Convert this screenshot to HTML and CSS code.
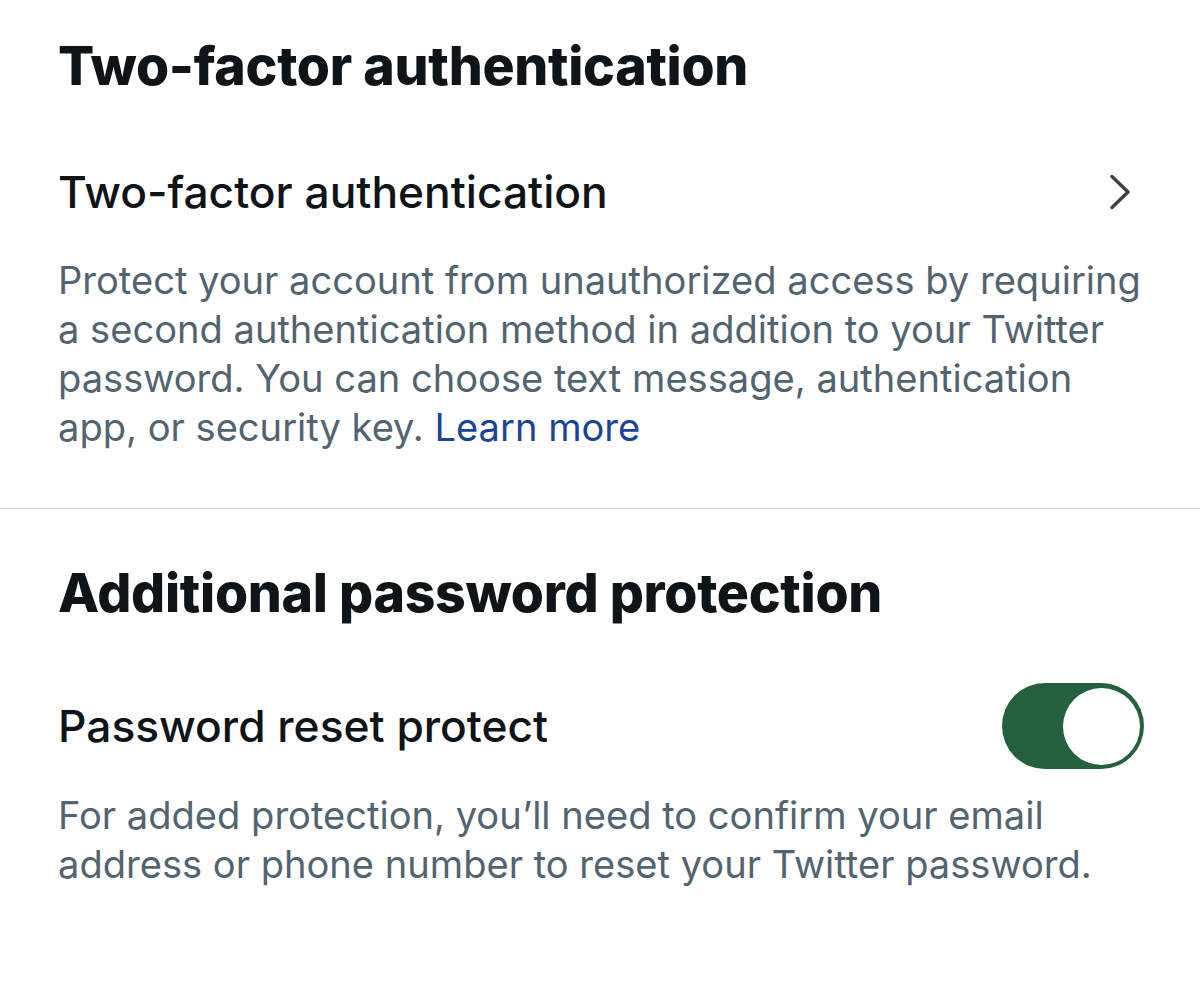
FILE: index.html
```html
<!DOCTYPE html>
<html lang="en">
<head>
<meta charset="utf-8">
<title>Security</title>
<link rel="stylesheet" href="styles.css">
</head>
<body>
<main class="page">
  <section class="section first">
    <h1 class="section-title">Two-factor authentication</h1>
    <div class="row">
      <h2 class="row-title">Two-factor authentication</h2>
      <svg class="chevron" width="24" height="36" viewBox="0 0 24 36" aria-hidden="true">
        <path d="M4 2.5 L20 18 L4 33.5" fill="none" stroke="#39424b" stroke-width="3.4" stroke-linecap="round" stroke-linejoin="round"/>
      </svg>
    </div>
    <p class="desc">Protect your account from unauthorized access by requiring<br>a second authentication method in addition to your Twitter<br>password. You can choose text message, authentication<br>app, or security key. <a class="link" href="#">Learn more</a></p>
  </section>
  <hr class="divider">
  <section class="section second">
    <h1 class="section-title">Additional password protection</h1>
    <div class="row">
      <h2 class="row-title">Password reset protect</h2>
      <span class="toggle" role="switch" aria-checked="true"><span class="knob"></span></span>
    </div>
    <p class="desc">For added protection, you’ll need to confirm your email<br>address or phone number to reset your Twitter password.</p>
  </section>
</main>
</body>
</html>
```

FILE: styles.css
```css
html, body {
  margin: 0;
  padding: 0;
  background: #ffffff;
}
body {
  font-family: "Inter", "Noto Sans", sans-serif;
  color: #0f1419;
  width: 1200px;
  height: 1002px;
  overflow: hidden;
}
.page {
  display: flex;
  flex-direction: column;
}
.section {
  padding: 0 56px 0 58px;
}
.first {
  padding-top: 30px;
}
.second {
  padding-top: 48px;
}
.section-title {
  margin: 0;
  font-size: 53.6px;
  font-weight: 800;
  line-height: 72px;
  letter-spacing: -0.3px;
}
.row {
  display: flex;
  align-items: center;
  justify-content: space-between;
}
.first .row {
  margin-top: 62px;
  height: 56px;
}
.second .row {
  margin-top: 53px;
  height: 88px;
}
.row-title {
  margin: 0;
  font-size: 44.3px;
  font-weight: 500;
  line-height: 56px;
  letter-spacing: 0;
}
.chevron {
  margin-right: 12px;
}
.desc {
  margin: 0;
  font-size: 38.1px;
  line-height: 49px;
  color: #536471;
  font-weight: 400;
}
.first .desc {
  margin-top: 36px;
}
.second .desc {
  margin-top: 21px;
}
.link {
  color: #1c4496;
  text-decoration: none;
}
.divider {
  border: 0;
  border-top: 1.5px solid #c9d0d5;
  margin: 56px 0 0 0;
  width: 100%;
}
.toggle {
  width: 142px;
  height: 86px;
  border-radius: 43px;
  background: #25603d;
  display: flex;
  align-items: center;
  justify-content: flex-end;
  padding: 0 4px;
  box-sizing: border-box;
}
.knob {
  width: 77px;
  height: 77px;
  border-radius: 50%;
  background: #ffffff;
}
```
